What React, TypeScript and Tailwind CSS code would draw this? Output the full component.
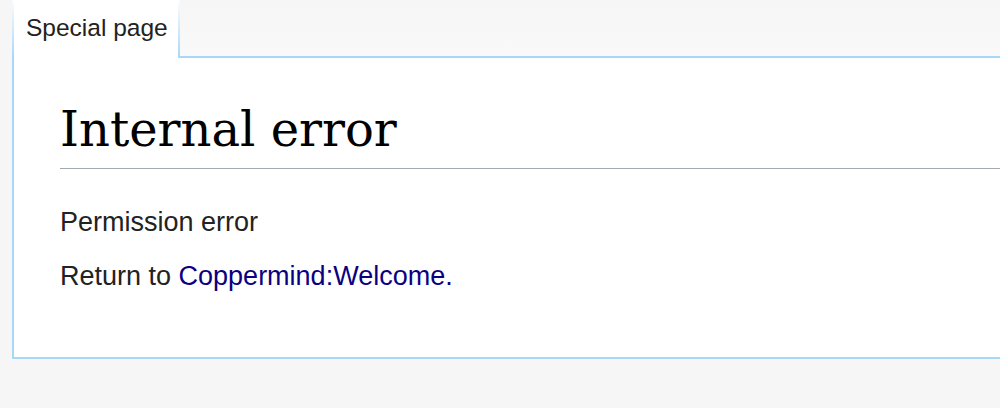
export default function App() {
  return (
    <div className="min-h-[408px] bg-[#f6f6f6] pl-3 font-['Liberation_Sans',Arial,sans-serif] text-[#222]">
      <div className="flex h-[58px]">
        <div className="w-[168px] bg-linear-to-b from-[#fbfdff] to-[#a7d7f9] px-[2px]">
          <div className="h-full bg-white pl-3 pt-[14px] text-[24.5px] leading-[28px] text-[#222]">
            Special page
          </div>
        </div>
        <div className="flex-1 border-b-2 border-[#a7d7f9] bg-linear-to-b from-[#f6f6f6] to-[#f9f9f9]" />
      </div>
      <div className="border-b-2 border-l-2 border-[#a7d7f9] bg-white pb-[61px] pl-[46px] pt-[41px]">
        <h1 className="border-b border-[#a2a9b1] pb-2 font-['DejaVu_Serif',Georgia,serif] text-[48px] leading-[61px] text-black">
          Internal error
        </h1>
        <p className="mt-[33px] text-[27px] leading-[40px]">Permission error</p>
        <p className="mt-[14px] text-[27px] leading-[40px]">
          Return to <a className="text-[#0b0080]">Coppermind:Welcome.</a>
        </p>
      </div>
    </div>
  );
}
